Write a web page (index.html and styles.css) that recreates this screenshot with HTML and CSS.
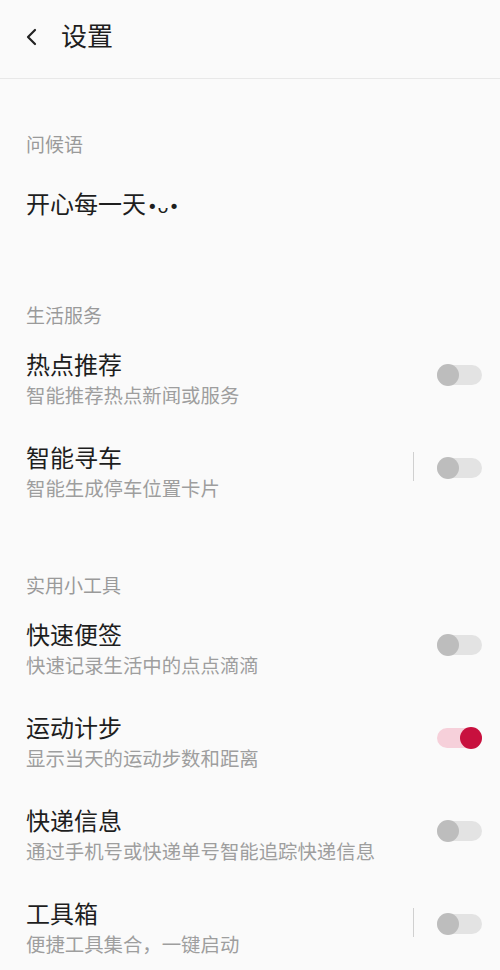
FILE: index.html
```html
<!DOCTYPE html>
<html lang="zh-CN">
<head>
<meta charset="utf-8">
<title>设置</title>
<link rel="stylesheet" href="styles.css">
</head>
<body>
<div class="page">
  <header class="header">
    <svg class="back" width="14" height="18" viewBox="0 0 14 18"><path d="M10 2 L3 9 L10 16" fill="none" stroke="#222" stroke-width="2.2" stroke-linecap="round" stroke-linejoin="round"/></svg>
    <h1 class="title">设置</h1>
  </header>

  <div class="section-title first">问候语</div>
  <div class="greeting">开心每一天<span class="face">•ᴗ•</span></div>

  <div class="section-title s2">生活服务</div>
  <div class="list">
    <div class="item">
      <div class="texts"><div class="name">热点推荐</div><div class="desc">智能推荐热点新闻或服务</div></div>
      <div class="switch"><span class="knob"></span></div>
    </div>
    <div class="item">
      <div class="texts"><div class="name">智能寻车</div><div class="desc">智能生成停车位置卡片</div></div>
      <span class="divider"></span>
      <div class="switch"><span class="knob"></span></div>
    </div>
  </div>

  <div class="section-title s3">实用小工具</div>
  <div class="list">
    <div class="item">
      <div class="texts"><div class="name">快速便签</div><div class="desc">快速记录生活中的点点滴滴</div></div>
      <div class="switch"><span class="knob"></span></div>
    </div>
    <div class="item">
      <div class="texts"><div class="name">运动计步</div><div class="desc">显示当天的运动步数和距离</div></div>
      <div class="switch on"><span class="knob"></span></div>
    </div>
    <div class="item">
      <div class="texts"><div class="name">快递信息</div><div class="desc">通过手机号或快递单号智能追踪快递信息</div></div>
      <div class="switch"><span class="knob"></span></div>
    </div>
    <div class="item">
      <div class="texts"><div class="name">工具箱</div><div class="desc">便捷工具集合，一键启动</div></div>
      <span class="divider"></span>
      <div class="switch"><span class="knob"></span></div>
    </div>
  </div>
</div>
</body>
</html>
```
FILE: styles.css
```css
html, body {
  margin: 0;
  padding: 0;
  background: #fafafa;
}
body {
  font-family: "Noto Sans CJK SC", "Noto Sans", "DejaVu Sans", sans-serif;
  color: #222;
  width: 500px;
  height: 970px;
  overflow: hidden;
}
.header {
  border-bottom: 1px solid #e8e8e8;
  display: flex;
  align-items: center;
  padding-left: 25px;
  box-sizing: border-box;
  height: 79px;
}
.back {
  display: block;
  margin-top: -5px;
}
.title {
  margin: 0 0 0 22px;
  font-size: 26px;
  font-weight: 400;
  line-height: 34px;
  margin-top: -9px;
  color: #1e1e1e;
}
.section-title {
  font-size: 19px;
  line-height: 24px;
  color: #9a9a9a;
  padding-left: 26px;
}
.section-title.first { margin-top: 53px; }
.section-title.s2 { margin-top: 80px; }
.section-title.s3 { margin-top: 72px; }
.greeting {
  margin-top: 31px;
  padding-left: 26px;
  font-size: 24px;
  line-height: 32px;
  color: #1e1e1e;
}
.face {
  font-family: "DejaVu Sans", sans-serif;
  font-size: 18px;
  margin-left: 1px;
}
.list {
  display: flex;
  flex-direction: column;
  gap: 33px;
  margin-top: 21px;
}
.item {
  display: flex;
  align-items: center;
  padding: 0 18px 0 26px;
}
.texts {
  flex: 1;
  display: flex;
  flex-direction: column;
  gap: 2px;
}
.name {
  font-size: 24px;
  line-height: 32px;
  color: #1e1e1e;
}
.desc {
  font-size: 19.4px;
  line-height: 26px;
  color: #9e9e9e;
  white-space: nowrap;
}
.divider {
  width: 1px;
  height: 29px;
  background: #d0d0d0;
  margin-right: 23px;
  margin-bottom: 10px;
}
.switch {
  position: relative;
  width: 45px;
  height: 20px;
  border-radius: 10px;
  background: #e3e3e3;
  margin-bottom: 6px;
}
.knob {
  position: absolute;
  left: 0;
  top: -1px;
  width: 22px;
  height: 22px;
  border-radius: 50%;
  background: #bdbdbd;
}
.switch.on {
  background: #f6d0da;
}
.switch.on .knob {
  left: auto;
  right: 0;
  background: #c8103e;
}
```
